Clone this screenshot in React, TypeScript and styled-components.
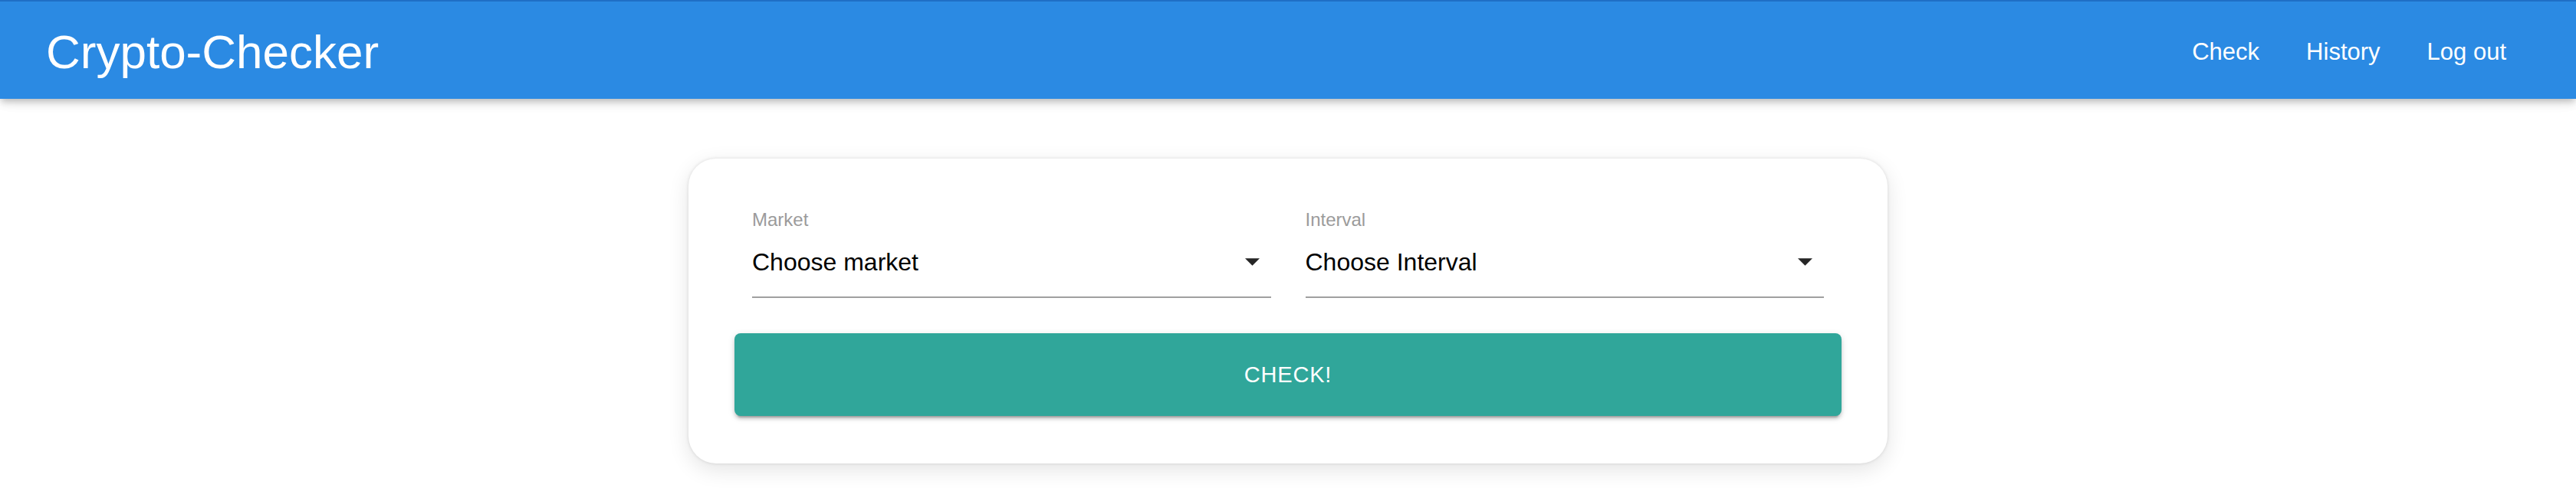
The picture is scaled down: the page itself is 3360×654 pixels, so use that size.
import React from "react";
import styled, { createGlobalStyle } from "styled-components";

const GlobalStyle = createGlobalStyle`
  html, body {
    margin: 0;
    padding: 0;
    background: #ffffff;
    font-family: "Liberation Sans", Arial, Helvetica, sans-serif;
  }
`;

const Page = styled.div`
  min-height: 654px;
  background: #ffffff;
`;

const AppBar = styled.header`
  height: 127px;
  box-sizing: border-box;
  border-top: 2px solid #1f6fc6;
  background: #2b8ae3;
  color: #ffffff;
  display: flex;
  align-items: center;
  justify-content: space-between;
  padding: 4px 91px 0 60px;
  box-sizing: content-box;
  height: 123px;
  box-shadow: 0 4px 8px -2px rgba(0, 0, 0, 0.2), 0 8px 10px 0 rgba(0, 0, 0, 0.08),
    0 2px 20px 0 rgba(0, 0, 0, 0.06);
`;

const Title = styled.h1`
  margin: 0;
  font-size: 62px;
  font-weight: 400;
  line-height: 72px;
`;

const Nav = styled.nav`
  display: flex;
  align-items: center;
  gap: 61px;
`;

const NavLink = styled.a`
  color: #ffffff;
  font-size: 31px;
  line-height: 40px;
  text-decoration: none;
  cursor: pointer;
`;

const Main = styled.main`
  display: flex;
  justify-content: center;
  padding-top: 78px;
`;

const Card = styled.section`
  width: 1564px;
  box-sizing: border-box;
  padding: 66px 60px 62px;
  border-radius: 36px;
  background: #ffffff;
  box-shadow: 0 0 4px rgba(0, 0, 0, 0.12), 0 8px 28px rgba(0, 0, 0, 0.11);
`;

const Fields = styled.div`
  display: grid;
  grid-template-columns: 1fr 1fr;
  gap: 45px;
  padding: 0 23px;
`;

const Field = styled.label`
  display: flex;
  flex-direction: column;
`;

const FieldLabel = styled.span`
  font-size: 24px;
  line-height: 28px;
  color: #9b9b9b;
`;

const SelectBox = styled.div`
  display: flex;
  align-items: center;
  justify-content: space-between;
  margin-top: 21px;
  padding-bottom: 25px;
  border-bottom: 2px solid #a0a0a0;
  cursor: pointer;
`;

const SelectValue = styled.span`
  font-size: 32px;
  line-height: 40px;
  color: #000000;
`;

const Arrow = styled.svg`
  width: 19px;
  height: 10px;
  margin-right: 15px;
  fill: #262626;
`;

const CheckButton = styled.button`
  display: block;
  width: 100%;
  height: 108px;
  margin-top: 46px;
  border: none;
  border-radius: 8px;
  background: #30a69a;
  color: #ffffff;
  font-family: inherit;
  font-size: 29px;
  letter-spacing: 0.8px;
  text-transform: uppercase;
  cursor: pointer;
  box-shadow: 0 6px 2px -4px rgba(0, 0, 0, 0.2), 0 4px 4px 0 rgba(0, 0, 0, 0.14),
    0 2px 10px 0 rgba(0, 0, 0, 0.12);
`;

const fields = [
  { label: "Market", placeholder: "Choose market" },
  { label: "Interval", placeholder: "Choose Interval" },
];

const App: React.FC = () => {
  return (
    <Page>
      <GlobalStyle />
      <AppBar>
        <Title>Crypto-Checker</Title>
        <Nav>
          <NavLink>Check</NavLink>
          <NavLink>History</NavLink>
          <NavLink>Log out</NavLink>
        </Nav>
      </AppBar>
      <Main>
        <Card>
          <Fields>
            {fields.map((f) => (
              <Field key={f.label}>
                <FieldLabel>{f.label}</FieldLabel>
                <SelectBox>
                  <SelectValue>{f.placeholder}</SelectValue>
                  <Arrow viewBox="0 0 10 5">
                    <path d="M0 0l5 5 5-5z" />
                  </Arrow>
                </SelectBox>
              </Field>
            ))}
          </Fields>
          <CheckButton>Check!</CheckButton>
        </Card>
      </Main>
    </Page>
  );
};

export default App;
